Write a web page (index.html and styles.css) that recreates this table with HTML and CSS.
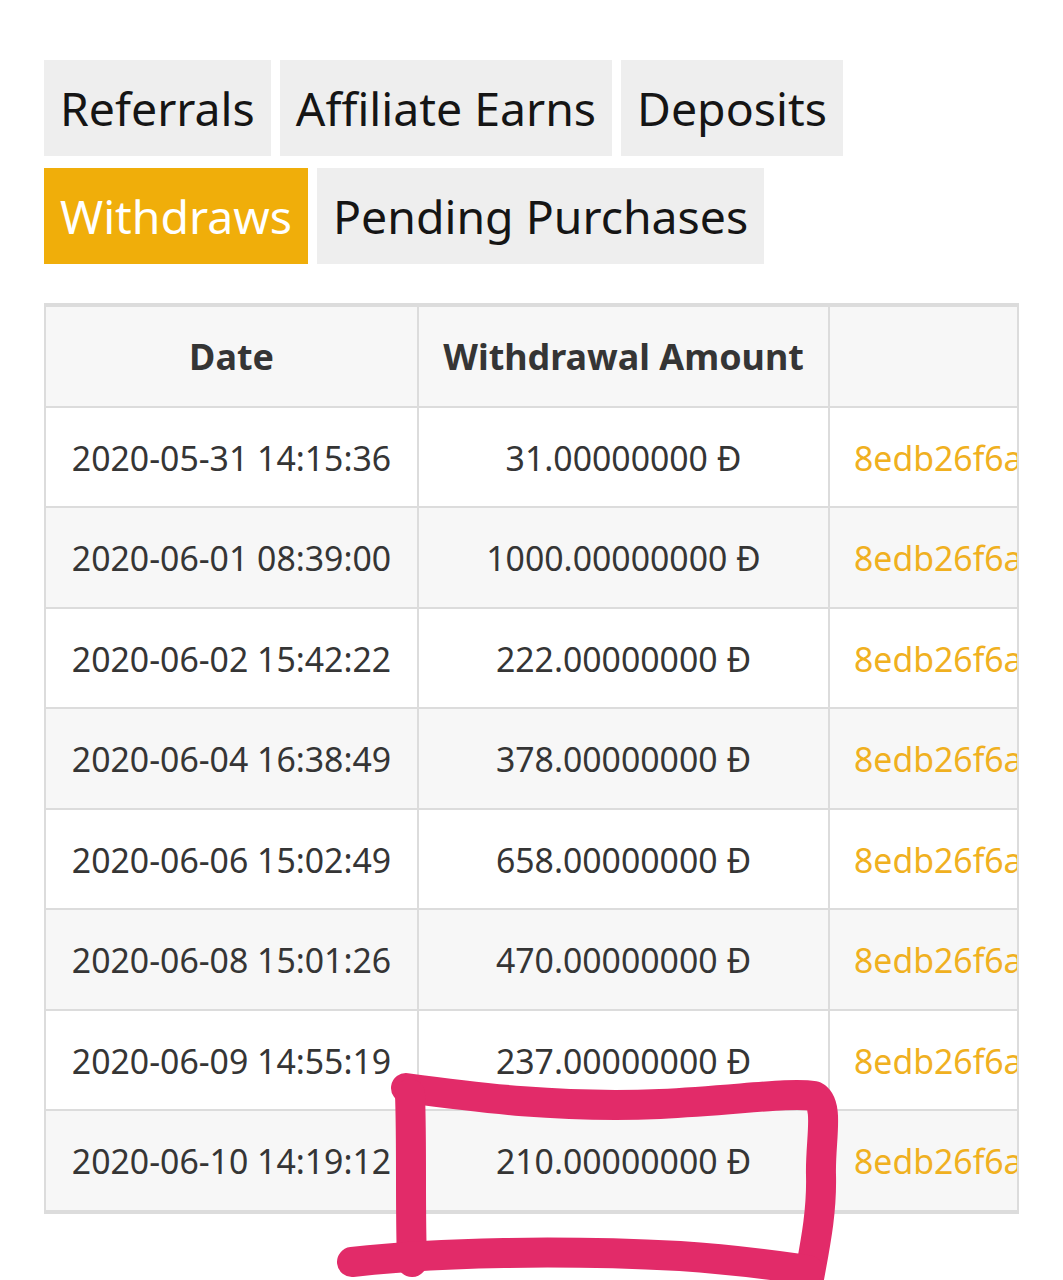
FILE: index.html
```html
<!DOCTYPE html>
<html lang="en">
<head>
<meta charset="utf-8">
<title>Withdraws</title>
<link rel="stylesheet" href="styles.css">
</head>
<body>
<main class="page">
  <nav class="tabs">
    <a class="tab">Referrals</a>
    <a class="tab">Affiliate Earns</a>
    <a class="tab">Deposits</a>
    <a class="tab tab-active">Withdraws</a>
    <a class="tab">Pending Purchases</a>
  </nav>
  <div class="table-wrap">
    <table class="data">
      <colgroup>
        <col class="col-date">
        <col class="col-amount">
        <col class="col-hash">
      </colgroup>
      <thead>
        <tr><th>Date</th><th>Withdrawal Amount</th><th></th></tr>
      </thead>
      <tbody>
        <tr><td>2020-05-31 14:15:36</td><td>31.00000000 Đ</td><td class="hash">8edb26f6a3c91d0e7b4f25a8c6e1d93b07f4a2e58c1b6d9f3e0a7c4b2d815e6f</td></tr>
        <tr><td>2020-06-01 08:39:00</td><td>1000.00000000 Đ</td><td class="hash">8edb26f6a3c91d0e7b4f25a8c6e1d93b07f4a2e58c1b6d9f3e0a7c4b2d815e6f</td></tr>
        <tr><td>2020-06-02 15:42:22</td><td>222.00000000 Đ</td><td class="hash">8edb26f6a3c91d0e7b4f25a8c6e1d93b07f4a2e58c1b6d9f3e0a7c4b2d815e6f</td></tr>
        <tr><td>2020-06-04 16:38:49</td><td>378.00000000 Đ</td><td class="hash">8edb26f6a3c91d0e7b4f25a8c6e1d93b07f4a2e58c1b6d9f3e0a7c4b2d815e6f</td></tr>
        <tr><td>2020-06-06 15:02:49</td><td>658.00000000 Đ</td><td class="hash">8edb26f6a3c91d0e7b4f25a8c6e1d93b07f4a2e58c1b6d9f3e0a7c4b2d815e6f</td></tr>
        <tr><td>2020-06-08 15:01:26</td><td>470.00000000 Đ</td><td class="hash">8edb26f6a3c91d0e7b4f25a8c6e1d93b07f4a2e58c1b6d9f3e0a7c4b2d815e6f</td></tr>
        <tr><td>2020-06-09 14:55:19</td><td>237.00000000 Đ</td><td class="hash">8edb26f6a3c91d0e7b4f25a8c6e1d93b07f4a2e58c1b6d9f3e0a7c4b2d815e6f</td></tr>
        <tr><td>2020-06-10 14:19:12</td><td>210.00000000 Đ</td><td class="hash">8edb26f6a3c91d0e7b4f25a8c6e1d93b07f4a2e58c1b6d9f3e0a7c4b2d815e6f</td></tr>
      </tbody>
    </table>
  </div>
</main>
<svg class="markup" width="1063" height="1280" viewBox="0 0 1063 1280" aria-hidden="true">
  <g fill="none" stroke="#e22b69" stroke-width="30" stroke-linecap="round" stroke-linejoin="round">
    <path d="M406 1088 C 480 1098, 560 1108, 660 1104 C 740 1100, 790 1092, 814 1096 C 830 1104, 820 1140, 821 1175 C 822 1215, 814 1250, 808 1284"/>
    <path d="M410 1094 C 412 1150, 410 1205, 412 1262"/>
    <path d="M352 1262 C 440 1252, 560 1250, 680 1256 C 740 1260, 780 1266, 808 1270"/>
  </g>
</svg>
</body>
</html>
```

FILE: styles.css
```css
html, body {
  margin: 0;
  padding: 0;
  background: #ffffff;
}

body {
  font-family: "Noto Sans", "Open Sans", "DejaVu Sans", sans-serif;
  width: 1063px;
  height: 1280px;
  overflow: hidden;
  position: relative;
}

.page {
  padding: 60px 44px 0 44px;
}

.tabs {
  display: flex;
  flex-wrap: wrap;
  column-gap: 9px;
  row-gap: 12px;
  width: 820px;
}

.tab {
  display: block;
  background: #eeeeee;
  color: #151515;
  font-size: 46.4px;
  line-height: 64px;
  padding: 16px 16px 16px 16px;
  white-space: nowrap;
}

.tab-active {
  background: #f0ae0a;
  color: #ffffff;
}

.table-wrap {
  margin-top: 39px;
  border: 2px solid #dcdcdc;
  overflow: hidden;
}

.data {
  border-collapse: collapse;
  table-layout: fixed;
  width: 2100px;
  white-space: nowrap;
}

.col-date { width: 372px; }
.col-amount { width: 411px; }

.data th,
.data td {
  border: 2px solid #dcdcdc;
  padding: 26px 24px 24px 24px;
  line-height: 48.5px;
  font-size: 33.8px;
  color: #353535;
  text-align: center;
  overflow: hidden;
}

.data tr > :first-child { border-left: none; }

.data th {
  font-size: 35.9px;
  font-weight: 700;
  background: #f7f7f7;
}

.data tbody tr:nth-child(even) td {
  background: #f7f7f7;
}

.data td.hash {
  text-align: left;
  color: #f0b020;
}

.markup {
  position: absolute;
  left: 0;
  top: 0;
  pointer-events: none;
}
```
